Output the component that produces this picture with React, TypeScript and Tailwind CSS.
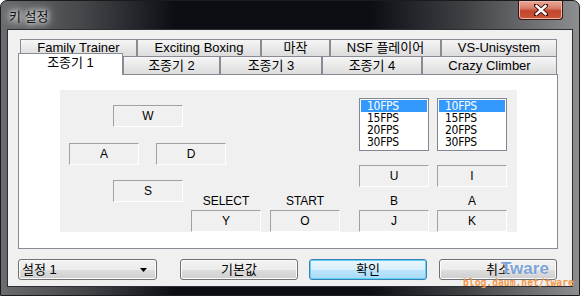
const ui = "[font-family:'Liberation_Sans','Noto_Sans_CJK_KR',sans-serif]";

const topTabs = [
  { label: "Family Trainer", width: "w-[117px]" },
  { label: "Exciting Boxing", width: "w-[124px]" },
  { label: "마작", width: "w-[69px]" },
  { label: "NSF 플레이어", width: "w-[111px]" },
  { label: "VS-Unisystem", width: "w-[116px]" },
];

const bottomTabs = [
  { label: "조종기 2", width: "w-[97px]" },
  { label: "조종기 3", width: "w-[102px]" },
  { label: "조종기 4", width: "w-[100px]" },
  { label: "Crazy Climber", width: "w-[135px]" },
];

const tabFace =
  "border border-b-0 border-[#898c95] bg-[linear-gradient(#f6f6f6,#e9e9e9_50%,#dcdcdc)] text-center text-[13px] text-black";

const buttonBase =
  "flex h-[21px] items-center rounded-[3px] border border-[#707070] bg-[linear-gradient(#f2f2f2_0%,#ebebeb_50%,#dddddd_51%,#cfcfcf_100%)] shadow-[inset_0_0_0_1px_#fcfcfc] text-[13px] text-black";

function KeyBox({ label, className = "" }: { label: string; className?: string }) {
  return (
    <div
      className={`flex h-[22px] w-[70px] shrink-0 items-center justify-center border border-t-[#a0a0a0] border-l-[#a0a0a0] border-r-white border-b-white bg-[#f0f0f0] text-[12px] text-black ${className}`}
    >
      {label}
    </div>
  );
}

function Labeled({ label, value }: { label: string; value: string }) {
  return (
    <div className="flex w-[70px] flex-col items-center">
      <div className="flex h-[18px] items-center text-[12px] text-black">{label}</div>
      <KeyBox label={value} />
    </div>
  );
}

function FpsList() {
  return (
    <div className="h-[53px] w-[70px] border border-[#828790] bg-white p-px">
      {["10FPS", "15FPS", "20FPS", "30FPS"].map((fps, i) => (
        <div
          key={fps}
          className={`h-[12px] pl-[6px] text-[12px] leading-[12px] tracking-[-0.3px] [font-family:'DejaVu_Sans_Condensed','DejaVu_Sans',sans-serif] [font-stretch:condensed] ${
            i === 0 ? "bg-[#3399ff] text-white" : "text-black"
          }`}
        >
          {fps}
        </div>
      ))}
    </div>
  );
}

function CloseGlyph() {
  return (
    <svg width="14" height="12" viewBox="0 0 14 12">
      <path d="M2 1.5 L12 10.5 M12 1.5 L2 10.5" stroke="#3a0c06" strokeWidth="4.2" strokeLinecap="square" />
      <path d="M2.5 2 L11.5 10 M11.5 2 L2.5 10" stroke="#ffffff" strokeWidth="2.4" strokeLinecap="square" />
    </svg>
  );
}

export default function App() {
  return (
    <main className={`h-[296px] w-[580px] overflow-hidden bg-white ${ui}`}>
      <div className="relative flex h-[296px] w-[580px] flex-col rounded-t-[7px] border border-[#1b1b1b] bg-[linear-gradient(90deg,#6a6c70_0%,#45474b_14%,#0b0e13_30%,#0b0e13_64%,#3e4044_80%,#8d8e90_100%)] px-[6px] pb-[8px]">
        {/* title bar */}
        <div className="flex h-[28px] shrink-0 items-start justify-between">
          <div className="mt-[6px] pl-[2px] text-[13px] text-[#141414] [text-shadow:0_0_5px_#ffffff,0_0_9px_#ffffff,0_0_12px_#e8e8e8]">
            키 설정
          </div>
          <div className="mr-[10px] flex h-[19px] w-[45px] items-center justify-center rounded-b-[4px] border border-t-0 border-[#3b1410] bg-[linear-gradient(#e9a898_0%,#d7806c_40%,#c4452c_55%,#c8573b_100%)] shadow-[inset_0_0_0_1px_#f0b8a8]">
            <CloseGlyph />
          </div>
        </div>

        {/* client area */}
        <div className="flex flex-1 flex-col border border-[#2c2f33] bg-[#f0f0f0] pl-[10px] pt-[9px]">
          <div className="ml-[2px] flex h-[17px]">
            {topTabs.map((t) => (
              <div key={t.label} className={`${t.width} ${tabFace} h-[17px] leading-[16px]`}>
                {t.label}
              </div>
            ))}
          </div>

          <div className="flex h-[18px] items-end">
            <div className="relative z-10 -mb-px h-[22px] w-[105px] border border-b-0 border-[#898c95] bg-white text-center text-[13px] leading-[17px] text-black">
              조종기 1
            </div>
            {bottomTabs.map((t) => (
              <div key={t.label} className={`${t.width} ${tabFace} h-[18px] leading-[18px]`}>
                {t.label}
              </div>
            ))}
          </div>

          <div className="h-[175px] w-[540px] shrink-0 border border-[#898c95] bg-white">
            <div className="ml-[41px] mt-[15px] flex h-[142px] w-[457px] overflow-hidden bg-[#f0f0f0]">
              {/* direction keys and select / start */}
              <div className="flex flex-col">
                <KeyBox label="W" className="ml-[53px] mt-[15px]" />
                <div className="ml-[9px] mt-[16px] flex gap-[17px]">
                  <KeyBox label="A" />
                  <KeyBox label="D" />
                </div>
                <div className="mt-[15px] flex items-start">
                  <KeyBox label="S" className="ml-[53px]" />
                  <div className="ml-[8px] mt-[12px] flex gap-[9px]">
                    <Labeled label="SELECT" value="Y" />
                    <Labeled label="START" value="O" />
                  </div>
                </div>
              </div>

              {/* turbo columns */}
              <div className="ml-[19px] flex gap-[8px]">
                {[
                  { turbo: "U", name: "B", key: "J" },
                  { turbo: "I", name: "A", key: "K" },
                ].map((c) => (
                  <div key={c.name} className="flex flex-col pt-[8px]">
                    <FpsList />
                    <KeyBox label={c.turbo} className="mt-[14px]" />
                    <div className="mt-[5px]">
                      <Labeled label={c.name} value={c.key} />
                    </div>
                  </div>
                ))}
              </div>
            </div>
          </div>

          <div className="mt-[10px] flex items-center">
            <div className={`${buttonBase} w-[139px] justify-between pl-[3px] pr-[9px]`}>
              <span>설정 1</span>
              <svg width="7" height="4" viewBox="0 0 7 4">
                <path d="M0 0 H7 L3.5 4 Z" fill="#000000" />
              </svg>
            </div>
            <div className={`${buttonBase} ml-[23px] w-[118px] justify-center`}>기본값</div>
            <div className="ml-[11px] flex h-[21px] w-[118px] items-center justify-center rounded-[3px] border border-[#3c7fb1] bg-[linear-gradient(#eaf6fd_0%,#d9f0fc_50%,#bee6fd_51%,#a7d9f5_100%)] text-[13px] text-black shadow-[inset_0_0_0_1px_#5ed3f8]">
              확인
            </div>
            <div className={`${buttonBase} ml-[12px] w-[118px] justify-center`}>취소</div>
          </div>
        </div>

        {/* watermark */}
        <div className="pointer-events-none absolute left-[500px] top-[255px] text-[17px] font-bold text-[#6c97d2]/90 [text-shadow:0_0_2px_#ffffff]">
          Tware
        </div>
        <div className="pointer-events-none absolute left-[462px] top-[276px] text-[9.7px] font-bold leading-[11px] text-[#f39a4c] [font-family:'DejaVu_Sans_Mono',monospace]">
          blog.daum.net/tware
        </div>
      </div>
    </main>
  );
}
